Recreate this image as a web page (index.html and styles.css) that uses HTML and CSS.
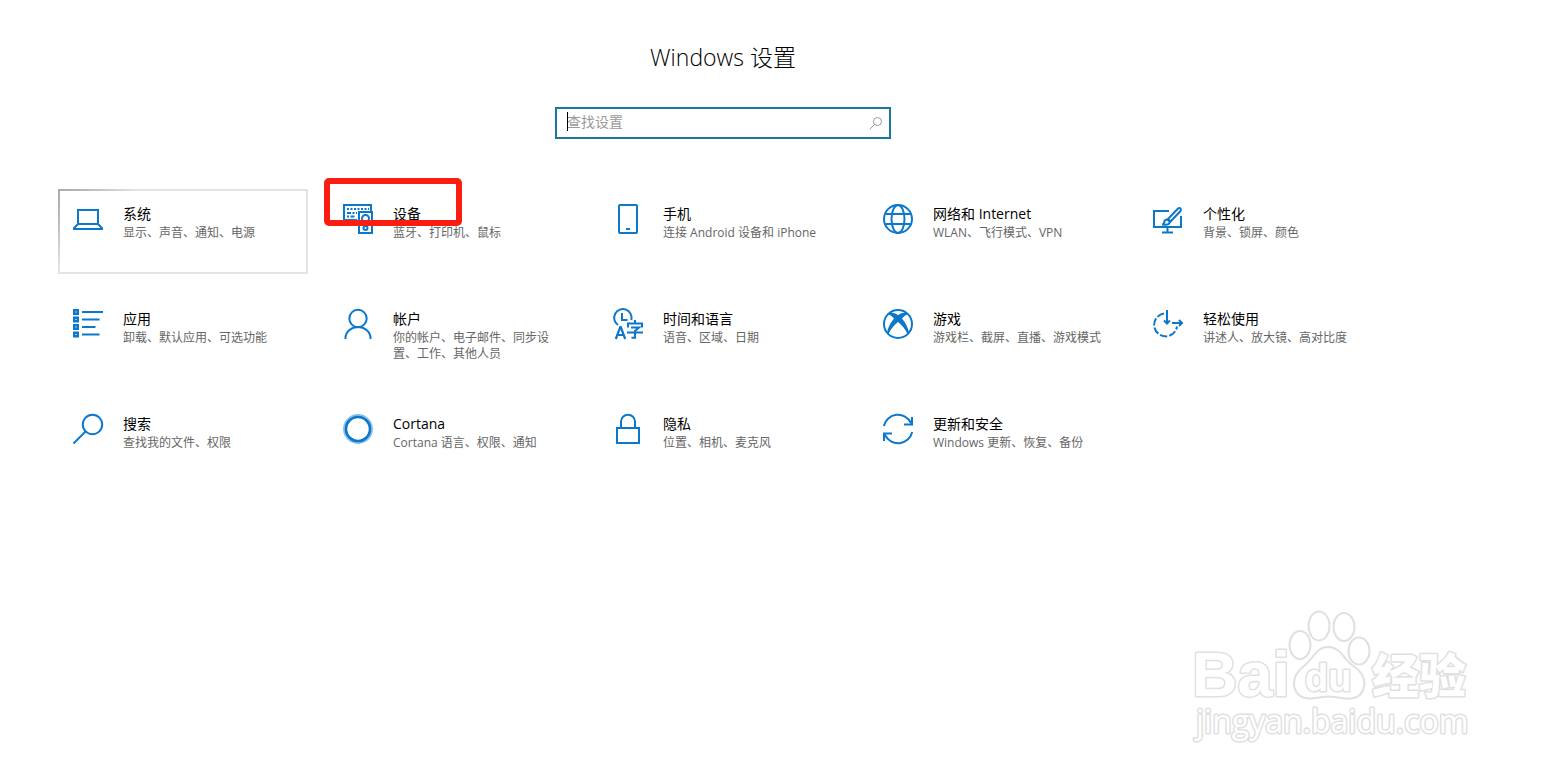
FILE: index.html
```html
<!DOCTYPE html>
<html lang="zh-CN">
<head>
<meta charset="utf-8">
<title>Windows 设置</title>
<link rel="stylesheet" href="styles.css">
</head>
<body>
<main class="settings">
  <h1 class="title">Windows 设置</h1>
  <form class="search" role="search">
    <input class="search-input" type="text" placeholder="查找设置" aria-label="查找设置">
    <span class="caret" aria-hidden="true"></span>
    <button class="search-button" type="button" aria-label="搜索">
      <svg class="search-icon" viewBox="0 0 14 14"><circle cx="8.5" cy="5.5" r="4"/><path d="M5.6 8.4L.8 13.2"/></svg>
    </button>
  </form>

  <nav class="grid" aria-label="设置类别">
    <a class="tile tile-active" href="#system">
      <svg class="icon" viewBox="0 0 30 30"><path d="M5 6h20v14H5zM5 20l-4 4.2V25h28v-.8L25 20"/></svg>
      <span class="text"><span class="name">系统</span><span class="desc">显示、声音、通知、电源</span></span>
    </a>
    <a class="tile" href="#devices">
      <svg class="icon" viewBox="0 0 30 30"><path d="M14 16H1V1h27v6"/><path d="M4 5h22" stroke-dasharray="2 1.5"/><path d="M4 9h10" stroke-dasharray="4 1.5 2 1.5"/><path d="M4 12.5h9" stroke-dasharray="2 1.5 4 1.5"/><path d="M16 8h13v21H16z"/><circle cx="22.5" cy="14.5" r="3.5"/><circle cx="22.5" cy="24" r="2"/></svg>
      <span class="text"><span class="name">设备</span><span class="desc">蓝牙、打印机、鼠标</span></span>
      <span class="marker" aria-hidden="true"></span>
    </a>
    <a class="tile" href="#phone">
      <svg class="icon" viewBox="0 0 30 30"><rect x="6" y="1" width="18" height="28" rx="1"/><path d="M13 25h4"/></svg>
      <span class="text"><span class="name">手机</span><span class="desc">连接 Android 设备和 iPhone</span></span>
    </a>
    <a class="tile" href="#network">
      <svg class="icon" viewBox="0 0 30 30"><circle cx="15" cy="15" r="14"/><ellipse cx="15" cy="15" rx="6.5" ry="14"/><path d="M2.500 10h25M2.500 20h25"/></svg>
      <span class="text"><span class="name">网络和 Internet</span><span class="desc">WLAN、飞行模式、VPN</span></span>
    </a>
    <a class="tile" href="#personalization">
      <svg class="icon" viewBox="0 0 30 30"><path d="M16 7H1v16h27V12M14.500 23v5M9 28.500h11"/><path d="M15 15L25 4.500q1.500-1 2.500 0t0 2.500L17.500 17.500z"/><path d="M13.800 15.500q2.500.5 3 3-1 3-7.500 2 2-.5 2-2.500t2.500-2.500z"/></svg>
      <span class="text"><span class="name">个性化</span><span class="desc">背景、锁屏、颜色</span></span>
    </a>

    <a class="tile" href="#apps">
      <svg class="icon" viewBox="0 0 30 30"><path d="M1.200 1.200h3.600v3.600H1.200zM1.200 8.700h3.600v3.600H1.200zM1.200 16.200h3.600v3.600H1.200zM1.200 23.700h3.600v3.600H1.200z" stroke-width="2.400"/><path d="M9 3h21M9 10.500h17.500M9 18h13.500M9 25.500h17.500"/></svg>
      <span class="text"><span class="name">应用</span><span class="desc">卸载、默认应用、可选功能</span></span>
    </a>
    <a class="tile" href="#accounts">
      <svg class="icon" viewBox="0 0 30 30"><circle cx="15" cy="9.5" r="8.7"/><path d="M2.500 30v-1a12.500 11 0 0 1 25 0v1"/></svg>
      <span class="text"><span class="name">帐户</span><span class="desc">你的帐户、电子邮件、同步设置、工作、其他人员</span></span>
    </a>
    <a class="tile" href="#time">
      <svg class="icon" viewBox="0 0 30 30"><path d="M5 16A8.700 8.700 0 1 1 18.300 11M9 4v7h5.500"/><path d="M2.800 30L7.200 18h.6L12.200 30M4.500 26h6" stroke-width="2.200"/><path d="M22 11v3M15 18.500V14.500h14v4M18 18.500h8L22 22v6.800h-3.500M14 23.500h16"/></svg>
      <span class="text"><span class="name">时间和语言</span><span class="desc">语音、区域、日期</span></span>
    </a>
    <a class="tile" href="#gaming">
      <svg class="icon" viewBox="0 0 30 30"><circle cx="15" cy="15" r="14"/><path class="solid" d="M7.500 3.500Q12 3.500 15 6q3-2.500 7.500-2.500l2 2Q22 6 19 9.500q5.500 6.500 7 14L24.500 25Q21 17.500 15 13 9 17.500 5.500 25L4 23.500q1.500-7.500 7-14Q8 6 5.500 5.500z"/></svg>
      <span class="text"><span class="name">游戏</span><span class="desc">游戏栏、截屏、直播、游戏模式</span></span>
    </a>
    <a class="tile" href="#ease">
      <svg class="icon" viewBox="0 0 30 30"><path d="M11 4.500A11.500 11.500 0 1 0 24 17.500" stroke-dasharray="7.500 2"/><path d="M14 1v13.500M11 11.500l3 3 3-3M19 14h10M26 11l3 3-3 3"/></svg>
      <span class="text"><span class="name">轻松使用</span><span class="desc">讲述人、放大镜、高对比度</span></span>
    </a>

    <a class="tile" href="#search">
      <svg class="icon" viewBox="0 0 30 30"><circle cx="19.5" cy="10.5" r="9.7"/><path d="M12.500 17.500L.5 29.500"/></svg>
      <span class="text"><span class="name">搜索</span><span class="desc">查找我的文件、权限</span></span>
    </a>
    <a class="tile" href="#cortana">
      <svg class="icon" viewBox="0 0 30 30"><circle class="halo" cx="15" cy="15" r="13.5"/><circle cx="15" cy="15" r="12" stroke-width="2.6"/></svg>
      <span class="text"><span class="name">Cortana</span><span class="desc">Cortana 语言、权限、通知</span></span>
    </a>
    <a class="tile" href="#privacy">
      <svg class="icon" viewBox="0 0 30 30"><path d="M4 14h22v15H4zM8 14V7.500a7 6.700 0 0 1 14 0V14"/></svg>
      <span class="text"><span class="name">隐私</span><span class="desc">位置、相机、麦克风</span></span>
    </a>
    <a class="tile" href="#update">
      <svg class="icon" viewBox="0 0 30 30"><path d="M.8 12A14.500 14.500 0 0 1 28 9M29 3v7.500h-8M29.200 18A14.500 14.500 0 0 1 2 21M1 27v-7.500h8"/></svg>
      <span class="text"><span class="name">更新和安全</span><span class="desc">Windows 更新、恢复、备份</span></span>
    </a>
  </nav>
</main>

<svg class="watermark" viewBox="0 0 290 145" role="img" aria-label="Baidu 经验 jingyan.baidu.com">
  <g class="mark">
    <text class="mark-latin" x="2" y="91">Bai</text>
    <ellipse cx="110" cy="40" rx="10.5" ry="14"/>
    <ellipse cx="129" cy="21" rx="10.5" ry="14.5"/>
    <ellipse cx="154" cy="22" rx="10.5" ry="14"/>
    <ellipse cx="169" cy="46" rx="10.5" ry="13.5"/>
    <path d="M138 42C150 42 153 53 162 60 171 66 176 73 174 82 172 92 163 95 151 93 143 91 134 91 126 93 113 95 106 90 104 81 103 72 107 66 115 60 124 53 126 42 138 42z"/>
    <text class="mark-du" x="115" y="86">du</text>
    <text class="mark-cjk" x="182" y="88">经验</text>
    <text class="mark-url" x="6" y="128">jingyan.baidu.com</text>
  </g>
</svg>
</body>
</html>
```
FILE: styles.css
```css
* {
  box-sizing: border-box;
}

body {
  margin: 0;
  background: #fff;
  color: #000;
  font-family: "Open Sans", "Noto Sans CJK SC", sans-serif;
}

.settings {
  display: flex;
  flex-direction: column;
  align-items: center;
  padding: 39px 168px 40px 58px;
}

.title {
  margin: 0 0 32px;
  font-size: 23px;
  line-height: 36px;
  font-weight: 300;
}

.search {
  position: relative;
  display: flex;
  align-items: center;
  width: 336px;
  height: 32px;
  margin-bottom: 50px;
  border: 2px solid #1a789f;
}

.search-input {
  flex: 1;
  min-width: 0;
  height: 100%;
  padding: 0 10px 4px;
  border: 0;
  outline: 0;
  background: none;
  font: 14px/20px "Open Sans", "Noto Sans CJK SC", sans-serif;
}

.search-input::placeholder {
  color: #999;
}

.caret {
  position: absolute;
  left: 10px;
  top: 3px;
  width: 1px;
  height: 19px;
  background: #000;
}

.search-button {
  display: flex;
  padding: 0 6px;
  border: 0;
  background: none;
}

.search-icon {
  width: 14px;
  height: 14px;
  fill: none;
  stroke: #999;
}

.grid {
  display: grid;
  grid-template-columns: repeat(auto-fill, 250px);
  grid-auto-rows: minmax(85px, auto);
  gap: 20px;
  width: 100%;
  max-width: 1330px;
}

.tile {
  position: relative;
  display: flex;
  align-items: flex-start;
  gap: 20px;
  padding: 13px;
  border: 2px solid transparent;
  color: inherit;
  text-decoration: none;
}

.tile-active {
  border-image: radial-gradient(circle at 0 0, #aaa 0, #bbb 30px, #e4e4e4 80px) 2;
}

.icon {
  flex: none;
  width: 30px;
  height: 30px;
  overflow: visible;
  fill: none;
  stroke: #0b78cc;
  stroke-width: 2;
}

.icon .solid {
  fill: #0b78cc;
  stroke: none;
}

.icon .halo {
  stroke: #8cc0ec;
  stroke-width: 3;
}

.text {
  display: flex;
  flex-direction: column;
  gap: 1px;
}

.name {
  font-size: 14px;
  line-height: 20px;
}

.desc {
  color: #666;
  font-size: 12px;
  line-height: 16px;
}

.marker {
  position: absolute;
  left: -6px;
  top: -13px;
  width: 138px;
  height: 48px;
  border: 6px solid #fb1c12;
  border-radius: 5px;
}

.watermark {
  position: absolute;
  right: 76px;
  bottom: 27px;
  width: 290px;
  height: 145px;
}

.mark {
  fill: #fff;
  stroke: #e0e0e0;
  stroke-width: 2;
  stroke-linejoin: round;
}

.mark text {
  paint-order: stroke;
  stroke-width: 3;
}

.mark-latin {
  font: bold 63px "Liberation Sans", sans-serif;
}

.mark-du {
  font: bold 38px "Liberation Sans", sans-serif;
}

.mark-cjk {
  font: 900 47px "Noto Sans CJK SC", sans-serif;
}

.mark-url {
  font: 500 32px "Open Sans", sans-serif;
}
```
